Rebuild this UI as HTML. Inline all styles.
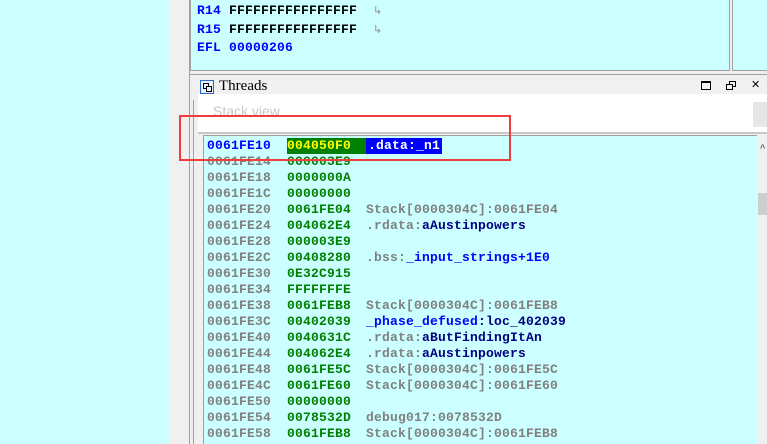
<!DOCTYPE html>
<html><head><style>
*{margin:0;padding:0;box-sizing:border-box}
body{width:767px;height:444px;overflow:hidden;background:#ccffff;position:relative;font-family:"Liberation Mono",monospace;font-weight:bold;font-size:13px;letter-spacing:0.2px}
.a{position:absolute}
.row{position:absolute;left:207px;height:16px;line-height:16px;white-space:pre}
.ad{color:#808080}
.v{color:#008000;position:absolute;left:80px}
.c{color:#808080;position:absolute;left:159px}
.n{color:#000080}
.b{color:#0000ff}
.reg{position:absolute;left:197px;line-height:16px;white-space:pre;color:#000}
.reg .l{color:#0000ff}
.arr{color:#909090;font-weight:normal;font-size:11px}
</style></head><body>
<div class="a" style="left:170px;top:0;width:597px;height:444px;background:#f0f0f0"></div>
<div class="a" style="left:189px;top:0;width:1px;height:444px;background:#a0a0a0"></div>
<div class="a" style="left:190px;top:-2px;width:540px;height:73px;background:#ccffff;border:1px solid #a0a0a0"></div>
<div class="a" style="left:732px;top:-2px;width:40px;height:73px;background:#ccffff;border:1px solid #a0a0a0"></div>
<div class="reg" style="top:3px"><span class="l">R14</span> FFFFFFFFFFFFFFFF  <span class="arr">↳</span></div>
<div class="reg" style="top:22px"><span class="l">R15</span> FFFFFFFFFFFFFFFF  <span class="arr">↳</span></div>
<div class="reg" style="top:40px"><span class="l">EFL 00000206</span></div>
<div class="a" style="left:190px;top:74px;width:577px;height:1px;background:#a0a0a0"></div>
<div class="a" style="left:200px;top:80px;width:14px;height:14px;border:1px solid #2a6ac0;background:#e8f0ff"></div>
<div class="a" style="left:203px;top:83px;width:6px;height:6px;border:1px solid #000"></div>
<div class="a" style="left:206px;top:86px;width:6px;height:6px;border:1px solid #000;background:#e8f0ff"></div>
<div class="a" style="left:219px;top:78px;font-family:'Liberation Serif',serif;font-weight:normal;font-size:15px;letter-spacing:0;color:#000">Threads</div>
<div class="a" style="left:701px;top:81px;width:10px;height:9px;border:1px solid #000;border-top-width:2px"></div>
<div class="a" style="left:729px;top:81px;width:7px;height:6px;border:1px solid #000"></div>
<div class="a" style="left:726px;top:84px;width:7px;height:6px;border:1px solid #000;background:#f0f0f0"></div>
<div class="a" style="left:751px;top:78px;font-family:'DejaVu Sans',sans-serif;font-weight:normal;font-size:11px;color:#000">✕</div>
<div class="a" style="left:198px;top:94px;width:569px;height:38px;background:#fff"></div>
<div class="a" style="left:213px;top:103px;font-family:'Liberation Sans',sans-serif;font-weight:normal;font-size:14px;letter-spacing:0;color:#c8c8c8">Stack view</div>
<div class="a" style="left:753px;top:102px;width:14px;height:25px;background:#e6e6e6"></div>
<div class="a" style="left:193px;top:100px;width:1px;height:344px;background:#a0a0a0"></div>
<div class="a" style="left:198px;top:132px;width:569px;height:2px;background:#c8c8c8"></div>
<div class="a" style="left:203px;top:135px;width:554px;height:309px;background:#ccffff;border-left:1px solid #a0a0a0;border-top:1px solid #a0a0a0"></div>
<div class="a" style="left:757px;top:136px;width:10px;height:308px;background:#f0f0f0"></div>
<div class="a" style="left:758px;top:193px;width:9px;height:22px;background:#cdcdcd"></div>
<div class="a" style="left:760px;top:144px;color:#606060;font-size:9px">^</div>
<div class="row" style="top:138px"><span style="color:#0000ff">0061FE10</span><span class="v" style="background:#008000;color:#ffff00;width:79px">004050F0 </span><span class="c" style="background:#0000ff;color:#fff;padding:0 2px">.data:_n1</span></div>
<div class="row" style="top:154px"><span class="ad">0061FE14</span><span class="v">000003E9</span></div>
<div class="row" style="top:170px"><span class="ad">0061FE18</span><span class="v">0000000A</span></div>
<div class="row" style="top:186px"><span class="ad">0061FE1C</span><span class="v">00000000</span></div>
<div class="row" style="top:202px"><span class="ad">0061FE20</span><span class="v">0061FE04</span><span class="c">Stack[0000304C]:0061FE04</span></div>
<div class="row" style="top:218px"><span class="ad">0061FE24</span><span class="v">004062E4</span><span class="c">.rdata:<span class="n">aAustinpowers</span></span></div>
<div class="row" style="top:234px"><span class="ad">0061FE28</span><span class="v">000003E9</span></div>
<div class="row" style="top:250px"><span class="ad">0061FE2C</span><span class="v">00408280</span><span class="c">.bss:<span class="b">_input_strings+1E0</span></span></div>
<div class="row" style="top:266px"><span class="ad">0061FE30</span><span class="v">0E32C915</span></div>
<div class="row" style="top:282px"><span class="ad">0061FE34</span><span class="v">FFFFFFFE</span></div>
<div class="row" style="top:298px"><span class="ad">0061FE38</span><span class="v">0061FEB8</span><span class="c">Stack[0000304C]:0061FEB8</span></div>
<div class="row" style="top:314px"><span class="ad">0061FE3C</span><span class="v">00402039</span><span class="c"><span class="b">_phase_defused</span><span class="n">:loc_402039</span></span></div>
<div class="row" style="top:330px"><span class="ad">0061FE40</span><span class="v">0040631C</span><span class="c">.rdata:<span class="n">aButFindingItAn</span></span></div>
<div class="row" style="top:346px"><span class="ad">0061FE44</span><span class="v">004062E4</span><span class="c">.rdata:<span class="n">aAustinpowers</span></span></div>
<div class="row" style="top:362px"><span class="ad">0061FE48</span><span class="v">0061FE5C</span><span class="c">Stack[0000304C]:0061FE5C</span></div>
<div class="row" style="top:378px"><span class="ad">0061FE4C</span><span class="v">0061FE60</span><span class="c">Stack[0000304C]:0061FE60</span></div>
<div class="row" style="top:394px"><span class="ad">0061FE50</span><span class="v">00000000</span></div>
<div class="row" style="top:410px"><span class="ad">0061FE54</span><span class="v">0078532D</span><span class="c">debug017:0078532D</span></div>
<div class="row" style="top:426px"><span class="ad">0061FE58</span><span class="v">0061FEB8</span><span class="c">Stack[0000304C]:0061FEB8</span></div>
<div class="a" style="left:179px;top:115px;width:332px;height:46px;border:2px solid #f03c3c"></div>
</body></html>
